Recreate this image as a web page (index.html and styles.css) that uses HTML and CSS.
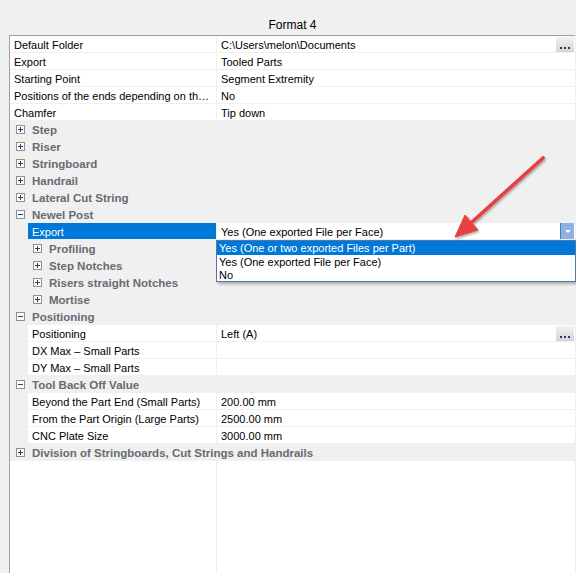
FILE: index.html
```html
<!DOCTYPE html>
<html>
<head>
<meta charset="utf-8">
<link rel="stylesheet" href="styles.css">
</head>
<body>
<div class="app">
  <div class="header">Format 4</div>
  <div class="panel">
    <div class="row"><div class="name">Default Folder</div><div class="val"><span>C:\Users\melon\Documents</span><span class="dots"><i></i><i></i><i></i></span></div></div>
    <div class="row"><div class="name">Export</div><div class="val">Tooled Parts</div></div>
    <div class="row"><div class="name">Starting Point</div><div class="val">Segment Extremity</div></div>
    <div class="row"><div class="name">Positions of the ends depending on th…</div><div class="val">No</div></div>
    <div class="row"><div class="name">Chamfer</div><div class="val">Tip down</div></div>

    <div class="row cat"><span class="box plus"></span>Step</div>
    <div class="row cat"><span class="box plus"></span>Riser</div>
    <div class="row cat"><span class="box plus"></span>Stringboard</div>
    <div class="row cat"><span class="box plus"></span>Handrail</div>
    <div class="row cat"><span class="box plus"></span>Lateral Cut String</div>
    <div class="row cat"><span class="box minus"></span>Newel Post</div>
    <div class="row sel-row">
      <div class="name sub selected">Export</div>
      <div class="val"><span>Yes (One exported File per Face)</span><span class="ddbtn"></span></div>
      <div class="droplist">
        <div class="opt hi">Yes (One or two exported Files per Part)</div>
        <div class="opt">Yes (One exported File per Face)</div>
        <div class="opt">No</div>
      </div>
    </div>
    <div class="row cat subcat"><span class="box plus"></span>Profiling</div>
    <div class="row cat subcat"><span class="box plus"></span>Step Notches</div>
    <div class="row cat subcat"><span class="box plus"></span>Risers straight Notches</div>
    <div class="row cat subcat"><span class="box plus"></span>Mortise</div>
    <div class="row cat"><span class="box minus"></span>Positioning</div>
    <div class="row"><div class="name sub">Positioning</div><div class="val"><span>Left (A)</span><span class="dots"><i></i><i></i><i></i></span></div></div>
    <div class="row"><div class="name sub">DX Max – Small Parts</div><div class="val"></div></div>
    <div class="row"><div class="name sub">DY Max – Small Parts</div><div class="val"></div></div>
    <div class="row cat"><span class="box minus"></span>Tool Back Off Value</div>
    <div class="row"><div class="name sub">Beyond the Part End (Small Parts)</div><div class="val">200.00 mm</div></div>
    <div class="row"><div class="name sub">From the Part Origin (Large Parts)</div><div class="val">2500.00 mm</div></div>
    <div class="row"><div class="name sub">CNC Plate Size</div><div class="val">3000.00 mm</div></div>
    <div class="row cat"><span class="box plus"></span>Division of Stringboards, Cut Strings and Handrails</div>
    <div class="filler"><div class="filler-name"></div></div>
  </div>
  <svg class="arrow" width="576" height="573" viewBox="0 0 576 573">
    <defs>
      <filter id="sh" x="-20%" y="-20%" width="140%" height="140%">
        <feDropShadow dx="1" dy="1.5" stdDeviation="1.2" flood-color="#000" flood-opacity="0.35"/>
      </filter>
    </defs>
    <g filter="url(#sh)" fill="#e8413f" stroke="#e8413f">
      <line x1="543" y1="158" x2="472" y2="222" stroke-width="3.6" stroke-linecap="round"/>
      <polygon points="455,237 478,230 465,215" stroke-width="1" stroke-linejoin="round"/>
    </g>
  </svg>
</div>
</body>
</html>
```
FILE: styles.css
```css
html, body {
  margin: 0;
  padding: 0;
  background: #f0f0f0;
}
.app {
  position: relative;
  width: 576px;
  height: 573px;
  overflow: hidden;
  font-family: "Liberation Sans", Arial, sans-serif;
  font-size: 11px;
  color: #000;
}
.header {
  height: 35px;
  margin-left: 10px;
  width: 565px;
  box-sizing: border-box;
  text-align: center;
  font-size: 12px;
  padding-top: 18px;
  line-height: 14px;
}
.panel {
  margin-left: 9px;
  width: 566px;
  height: 538px;
  box-sizing: border-box;
  border-top: 1px solid #a0a0a0;
  border-left: 1px solid #a0a0a0;
  background: #fff;
  display: flex;
  flex-direction: column;
}
.row {
  display: flex;
  height: 17px;
  flex: 0 0 17px;
  box-sizing: border-box;
  border-bottom: 1px solid #f0f0f0;
  line-height: 18px;
  white-space: nowrap;
}
.name {
  width: 207px;
  flex: 0 0 207px;
  box-sizing: border-box;
  padding-left: 4px;
  padding-top: 1px;
  border-right: 1px solid #f0f0f0;
  overflow: hidden;
  height: 16px;
  line-height: 16px;
}
.name.sub {
  border-left: 18px solid #f0f0f0;
}
.name.selected {
  background: #0078d7;
  color: #fff;
}
.val {
  flex: 1;
  padding-left: 4px;
  display: flex;
  justify-content: space-between;
  align-items: flex-start;
  min-width: 0;
  height: 16px;
  line-height: 18px;
}
.dots {
  width: 18px;
  height: 15px;
  margin-top: 1px;
  margin-right: 1px;
  box-sizing: border-box;
  background: linear-gradient(#f2f2f2, #d4d4d4);
  display: flex;
  align-items: flex-end;
  justify-content: center;
  gap: 2px;
  padding-bottom: 3px;
}
.dots i {
  width: 2px;
  height: 2px;
  background: #3a2f7a;
}
.cat {
  background: #f0f0f0;
  border-bottom-color: #f0f0f0;
  font-weight: bold;
  font-size: 11.5px;
  color: #676b72;
  align-items: center;
  padding-left: 6px;
  padding-top: 2px;
}
.cat.subcat {
  padding-left: 23px;
}
.box {
  width: 9px;
  height: 9px;
  box-sizing: border-box;
  border: 1px solid #8f9090;
  background: #fcfcfc;
  margin-right: 7px;
  position: relative;
  flex: 0 0 9px;
  margin-top: -2px;
}
.box::before {
  content: "";
  position: absolute;
  left: 1px;
  top: 3px;
  width: 5px;
  height: 1px;
  background: #243e76;
}
.box.plus::after {
  content: "";
  position: absolute;
  left: 3px;
  top: 1px;
  width: 1px;
  height: 5px;
  background: #243e76;
}
.sel-row {
  position: relative;
}
.ddbtn {
  width: 14px;
  height: 16px;
  margin-right: 1px;
  box-sizing: border-box;
  background: #8db2e2;
  border-left: 1px solid #3d7fcf;
  position: relative;
}
.ddbtn::after {
  content: "";
  position: absolute;
  left: 4px;
  top: 7px;
  border-left: 3px solid transparent;
  border-right: 3px solid transparent;
  border-top: 3px solid #fff;
}
.droplist {
  position: absolute;
  top: 17px;
  left: 206px;
  width: 360px;
  box-sizing: border-box;
  border: 1px solid #5077b0;
  background: #fff;
  box-shadow: 2px 2px 3px rgba(0, 0, 0, 0.3);
  z-index: 2;
}
.opt {
  height: 13px;
  line-height: 14px;
  padding-left: 2px;
  font-size: 11px;
}
.opt.hi {
  height: 14px;
  line-height: 15px;
  background: #0078d7;
  color: #fff;
}
.filler {
  flex: 1;
  display: flex;
}
.filler-name {
  width: 207px;
  box-sizing: border-box;
  border-right: 1px solid #f0f0f0;
}
.arrow {
  position: absolute;
  left: 0;
  top: 0;
  pointer-events: none;
  z-index: 3;
}
```
